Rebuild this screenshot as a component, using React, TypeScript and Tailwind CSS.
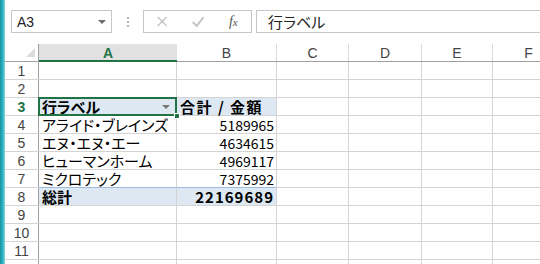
type Row = { n: number; a: string; b: string; kind?: "head" | "total" };

const rows: Row[] = [
  { n: 1, a: "", b: "" },
  { n: 2, a: "", b: "" },
  { n: 3, a: "行ラベル", b: "合計 / 金額", kind: "head" },
  { n: 4, a: "アライド・ブレインズ", b: "5189965" },
  { n: 5, a: "エヌ・エヌ・エー", b: "4634615" },
  { n: 6, a: "ヒューマンホーム", b: "4969117" },
  { n: 7, a: "ミクロテック", b: "7375992" },
  { n: 8, a: "総計", b: "22169689", kind: "total" },
  { n: 9, a: "", b: "" },
  { n: 10, a: "", b: "" },
  { n: 11, a: "", b: "" },
];

const cols = [
  { id: "C", w: "w-[72px]" },
  { id: "D", w: "w-[73px]" },
  { id: "E", w: "w-[71px]" },
  { id: "F", w: "w-[72px]" },
];

const jp = { fontFamily: '"MS PGothic", "Noto Sans CJK JP", sans-serif', fontFeatureSettings: '"palt"' };
const ui = { fontFamily: '"Liberation Sans", Arial, sans-serif' };

function FormulaBar() {
  return (
    <div className="flex h-[44px] shrink-0 items-start pt-[10px] pl-[6px]">
      <div className="flex h-[23px] w-[101px] shrink-0 items-center justify-between border border-[#c6c6c6] pl-[5px] pr-[5px]">
        <span className="text-[14px] leading-[16px] text-[#222]" style={ui}>A3</span>
        <span className="h-0 w-0 border-x-[4px] border-t-[4px] border-x-transparent border-t-[#6d6d6d]" />
      </div>
      <div className="flex h-[23px] w-[31px] shrink-0 flex-col items-center justify-center gap-[2px]">
        <span className="h-[2px] w-[2px] bg-[#b5b5b5]" />
        <span className="h-[2px] w-[2px] bg-[#b5b5b5]" />
        <span className="h-[2px] w-[2px] bg-[#b5b5b5]" />
      </div>
      <div className="flex h-[23px] w-[109px] shrink-0 items-center border border-[#c6c6c6]">
        <svg width="36" height="21" viewBox="0 0 36 21" className="ml-[1px]">
          <path d="M13 6 L22 15 M22 6 L13 15" stroke="#c4c4c4" strokeWidth="1.4" fill="none" />
        </svg>
        <svg width="36" height="21" viewBox="0 0 36 21">
          <path d="M13 11 L17 15 L24 6" stroke="#c4c4c4" strokeWidth="2" fill="none" />
        </svg>
        <span className="w-[36px] text-center text-[14px] leading-[16px] italic text-[#555]" style={{ fontFamily: '"Liberation Serif", serif' }}>
          f<span className="text-[11px]">x</span>
        </span>
      </div>
      <div className="ml-[4px] flex h-[23px] flex-1 items-center border-y border-l border-[#c6c6c6] pl-[11px]">
        <span className="text-[15px] leading-[18px] text-[#222]" style={jp}>行ラベル</span>
      </div>
    </div>
  );
}

function HeaderRow() {
  return (
    <div className="flex h-[18px] shrink-0 border-b border-[#9f9f9f] text-[14px] leading-[16px] text-[#444]" style={ui}>
      <div className="relative w-[34px] shrink-0 border-r border-[#9f9f9f]">
        <span className="absolute bottom-[4px] right-[3px] h-0 w-0 border-b-[9px] border-l-[9px] border-b-[#dcdcdc] border-l-transparent" />
      </div>
      <div className="relative flex w-[138px] shrink-0 items-center justify-center bg-[#e1e1e1] font-bold text-[#217346]">
        A
        <span className="absolute -bottom-[1px] left-0 right-0 h-[2px] bg-[#217346]" />
      </div>
      <div className="flex w-[100px] shrink-0 items-center justify-center border-r border-[#dadada]">B</div>
      {cols.map((c) => (
        <div key={c.id} className={`${c.w} flex shrink-0 items-center justify-center border-r border-[#dadada]`}>
          {c.id}
        </div>
      ))}
    </div>
  );
}

function SheetRow({ row }: { row: Row }) {
  const head = row.kind === "head";
  const total = row.kind === "total";
  const fill = head || total ? "bg-[#dde8f3]" : "";
  return (
    <div className="flex h-[18px] shrink-0 border-b border-[#d4d4d4] leading-[16px]">
      <div
        className={`flex w-[34px] shrink-0 items-center justify-center border-r border-[#9f9f9f] text-[14px] ${
          head ? "font-bold text-[#217346]" : "text-[#444]"
        }`}
        style={ui}
      >
        {row.n}
      </div>
      <div
        className={`relative flex w-[138px] shrink-0 items-center whitespace-nowrap border-r border-[#d4d4d4] pl-[3px] text-[15px] text-black ${fill} ${
          head || total ? "font-bold" : ""
        } ${total ? "-mt-[1px] border-t border-t-[#9bbbe0]" : ""}`}
        style={jp}
      >
        {row.a}
        {head && (
          <>
            <span className="absolute -left-[1px] -top-[1px] bottom-[-1px] right-[-1px] border-2 border-[#217346]" />
            <span className="absolute right-[2px] top-[2px] flex h-[13px] w-[16px] items-center justify-center">
              <span className="h-0 w-0 border-x-[4px] border-t-[4px] border-x-transparent border-t-[#777]" />
            </span>
            <span className="absolute -bottom-[4px] -right-[4px] z-10 h-[6px] w-[6px] border border-white bg-[#217346]" />
          </>
        )}
      </div>
      <div
        className={`flex w-[100px] shrink-0 items-center whitespace-nowrap border-r border-[#d4d4d4] text-black ${fill} ${
          head ? "justify-start pl-[3px] text-[15px] font-bold tracking-[1.5px]" : "justify-end pr-[2px]"
        } ${total ? "-mt-[1px] border-t border-t-[#9bbbe0] text-[15px] font-bold tracking-[1px]" : "text-[14px]"}`}
        style={jp}
      >
        {row.b}
      </div>
      {cols.map((c) => (
        <div key={c.id} className={`${c.w} shrink-0 border-r border-[#d4d4d4]`} />
      ))}
    </div>
  );
}

export default function App() {
  return (
    <div className="flex h-[264px] w-[540px] overflow-hidden bg-white">
      <div className="w-[5px] shrink-0 bg-gradient-to-r from-[#17919f] via-[#2ab0bc] to-[#7fd3da]" />
      <div className="flex min-w-0 flex-1 flex-col">
        <FormulaBar />
        <HeaderRow />
        {rows.map((r) => (
          <SheetRow key={r.n} row={r} />
        ))}
        <div className="flex h-[18px] shrink-0">
          <div className="w-[34px] shrink-0 border-r border-[#9f9f9f]" />
          <div className="w-[138px] shrink-0 border-r border-[#d4d4d4]" />
          <div className="w-[100px] shrink-0 border-r border-[#d4d4d4]" />
          {cols.map((c) => (
            <div key={c.id} className={`${c.w} shrink-0 border-r border-[#d4d4d4]`} />
          ))}
        </div>
      </div>
    </div>
  );
}
